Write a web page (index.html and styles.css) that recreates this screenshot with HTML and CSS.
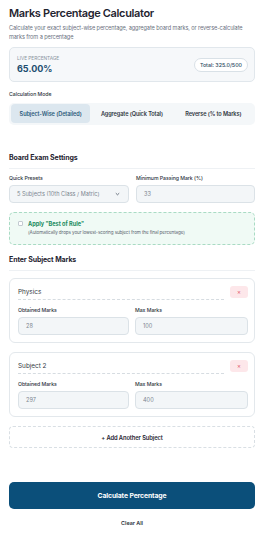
FILE: index.html
```html
<!DOCTYPE html>
<html>
<head>
<meta charset="utf-8">
<link rel="stylesheet" href="styles.css">
</head>
<body>
<div class="page">
  <h1 class="title">Marks Percentage Calculator</h1>
  <p class="desc">Calculate your exact subject-wise percentage, aggregate board marks, or reverse-calculate marks from a percentage</p>

  <div class="live">
    <div class="live-left">
      <div class="live-label">LIVE PERCENTAGE</div>
      <div class="live-value">65.00%</div>
    </div>
    <div class="pill">Total: 325.0/500</div>
  </div>

  <div class="label mode-label">Calculation Mode</div>
  <div class="tabs">
    <div class="tab active">Subject-Wise (Detailed)</div>
    <div class="tab">Aggregate (Quick Total)</div>
    <div class="tab">Reverse (% to Marks)</div>
  </div>

  <h2 class="section">Board Exam Settings</h2>
  <div class="grid2">
    <div class="field">
      <div class="label">Quick Presets</div>
      <div class="input select">
        <span>5 Subjects (10th Class / Matric)</span>
        <svg class="chev" width="5" height="4" viewBox="0 0 5 4"><path d="M0.8 1.2 L2.5 2.8 L4.2 1.2" fill="none" stroke="#4b5563" stroke-width="0.8"/></svg>
      </div>
    </div>
    <div class="field">
      <div class="label">Minimum Passing Mark (%)</div>
      <div class="input">33</div>
    </div>
  </div>

  <div class="rule">
    <div class="checkbox"></div>
    <div class="rule-text">
      <div class="rule-title">Apply "Best of Rule"</div>
      <div class="rule-sub">(Automatically drops your lowest-scoring subject from the final percentage)</div>
    </div>
  </div>

  <h2 class="section">Enter Subject Marks</h2>

  <div class="card">
    <div class="card-head">
      <div class="card-name">Physics</div>
      <div class="remove">×</div>
    </div>
    <div class="grid2 inner">
      <div class="field">
        <div class="label">Obtained Marks</div>
        <div class="input">28</div>
      </div>
      <div class="field">
        <div class="label">Max Marks</div>
        <div class="input">100</div>
      </div>
    </div>
  </div>

  <div class="card">
    <div class="card-head">
      <div class="card-name">Subject 2</div>
      <div class="remove">×</div>
    </div>
    <div class="grid2 inner">
      <div class="field">
        <div class="label">Obtained Marks</div>
        <div class="input">297</div>
      </div>
      <div class="field">
        <div class="label">Max Marks</div>
        <div class="input">400</div>
      </div>
    </div>
  </div>

  <div class="add">+ Add Another Subject</div>

  <div class="calc">Calculate Percentage</div>
  <div class="clear">Clear All</div>
</div>
</body>
</html>
```

FILE: styles.css
```css
* { box-sizing: border-box; }
body {
  margin: 0;
  font-family: Inter, "Noto Sans", sans-serif;
  color: #1f2937;
  background: #ffffff;
}
.page {
  width: 255px;
  padding: 6px 0 0 9px;
}
.title {
  margin: 0;
  font-size: 11px;
  line-height: 14px;
  font-weight: 600;
  letter-spacing: -0.35px;
  color: #1f2430;
}
.desc {
  margin: 4px 0 0;
  font-size: 5.6px;
  line-height: 9px;
  color: #6b7280;
  letter-spacing: -0.1px;
}
.live {
  margin-top: 5px;
  height: 35px;
  background: #f6f8fa;
  border: 1px solid #e1e7ec;
  border-radius: 5px;
  display: flex;
  align-items: center;
  justify-content: space-between;
  padding: 0 6px 0 7px;
}
.live-label {
  font-size: 4.8px;
  color: #8a949e;
  letter-spacing: -0.05px;
  line-height: 6px;
}
.live-value {
  font-size: 9px;
  font-weight: 700;
  color: #1d4e70;
  line-height: 11px;
  margin-top: 2px;
}
.pill {
  height: 14px;
  padding: 0 5px;
  border: 1px solid #d9e1e7;
  border-radius: 8px;
  background: #fff;
  font-size: 5.3px;
  line-height: 12px;
  color: #2a4a62;
  font-weight: 500;
}
.label {
  font-size: 5.2px;
  line-height: 7px;
  font-weight: 500;
  color: #2d3440;
  letter-spacing: -0.05px;
}
.mode-label {
  margin-top: 9px;
}
.tabs {
  margin-top: 5px;
  height: 22px;
  background: #f4f7f9;
  border-radius: 5px;
  padding: 1px 2px 2px;
  display: grid;
  grid-template-columns: 1fr 1fr 1fr;
  gap: 2px;
}
.tab {
  display: flex;
  align-items: center;
  justify-content: center;
  font-size: 5.6px;
  font-weight: 600;
  color: #30363f;
  border-radius: 4px;
  letter-spacing: -0.1px;
}
.tab.active {
  background: #dce7ef;
  color: #2d5a7b;
}
.section {
  margin: 28px 0 0;
  font-size: 7px;
  line-height: 10px;
  font-weight: 700;
  color: #1f2430;
  padding-bottom: 5px;
  border-bottom: 1px solid #eef1f4;
  letter-spacing: -0.1px;
}
.section + .grid2 {
  margin-top: 6px;
}
.grid2 {
  display: grid;
  grid-template-columns: 120px 119px;
  gap: 7px;
}
.field .label {
  margin-bottom: 3px;
}
.input {
  height: 18px;
  background: #f3f6f8;
  border: 1px solid #dbe2e7;
  border-radius: 4px;
  font-size: 5.6px;
  color: #7c8690;
  display: flex;
  align-items: center;
  padding: 0 7px;
}
.select {
  justify-content: space-between;
  padding-right: 8px;
}
.chev {
  display: block;
}
.rule {
  margin-top: 9px;
  height: 33px;
  background: #f0faf5;
  border: 1px dashed #a9dbc4;
  border-radius: 5px;
  display: flex;
  align-items: flex-start;
  padding: 7px 0 0 8px;
  gap: 5px;
}
.checkbox {
  width: 5px;
  height: 5px;
  margin-top: 1px;
  border: 0.6px solid #c3cad1;
  background: #fff;
  border-radius: 1px;
}
.rule-title {
  font-size: 5.6px;
  line-height: 7px;
  font-weight: 700;
  color: #208a5d;
  margin-top: 1px;
}
.rule-sub {
  font-size: 4.6px;
  line-height: 6px;
  color: #5b6470;
  margin-top: 2px;
  letter-spacing: -0.1px;
}
.rule + .section {
  margin-top: 10px;
}
.card {
  margin-top: 8px;
  border: 1px solid #e3e8ec;
  border-radius: 6px;
  padding: 7px 6px 7px 8px;
}
.section + .card {
  margin-top: 7px;
}
.card + .card {
  margin-top: 9px;
}
.card-head {
  display: flex;
  align-items: flex-start;
  gap: 6px;
}
.card-name {
  flex: 1;
  font-size: 6.4px;
  line-height: 8px;
  color: #343a44;
  padding: 2px 0 3px;
  border-bottom: 1px dashed #d6dce1;
}
.remove {
  width: 18px;
  height: 12px;
  background: #fde7ea;
  color: #e25566;
  border-radius: 3px;
  font-size: 6px;
  line-height: 12px;
  text-align: center;
}
.inner {
  margin-top: 7px;
  grid-template-columns: 111px 113px;
  gap: 6px;
}
.add {
  margin-top: 9px;
  height: 22px;
  border: 1px dashed #d9dfe4;
  border-radius: 4px;
  font-size: 5.8px;
  font-weight: 600;
  color: #1f2430;
  display: flex;
  align-items: center;
  justify-content: center;
  letter-spacing: -0.1px;
}
.calc {
  margin-top: 34px;
  height: 27px;
  background: #0b4f7a;
  border-radius: 5px;
  color: #fff;
  font-size: 6.8px;
  font-weight: 700;
  display: flex;
  align-items: center;
  justify-content: center;
  letter-spacing: -0.1px;
}
.clear {
  margin-top: 11px;
  text-align: center;
  font-size: 5.4px;
  font-weight: 600;
  color: #2d333c;
}
```
